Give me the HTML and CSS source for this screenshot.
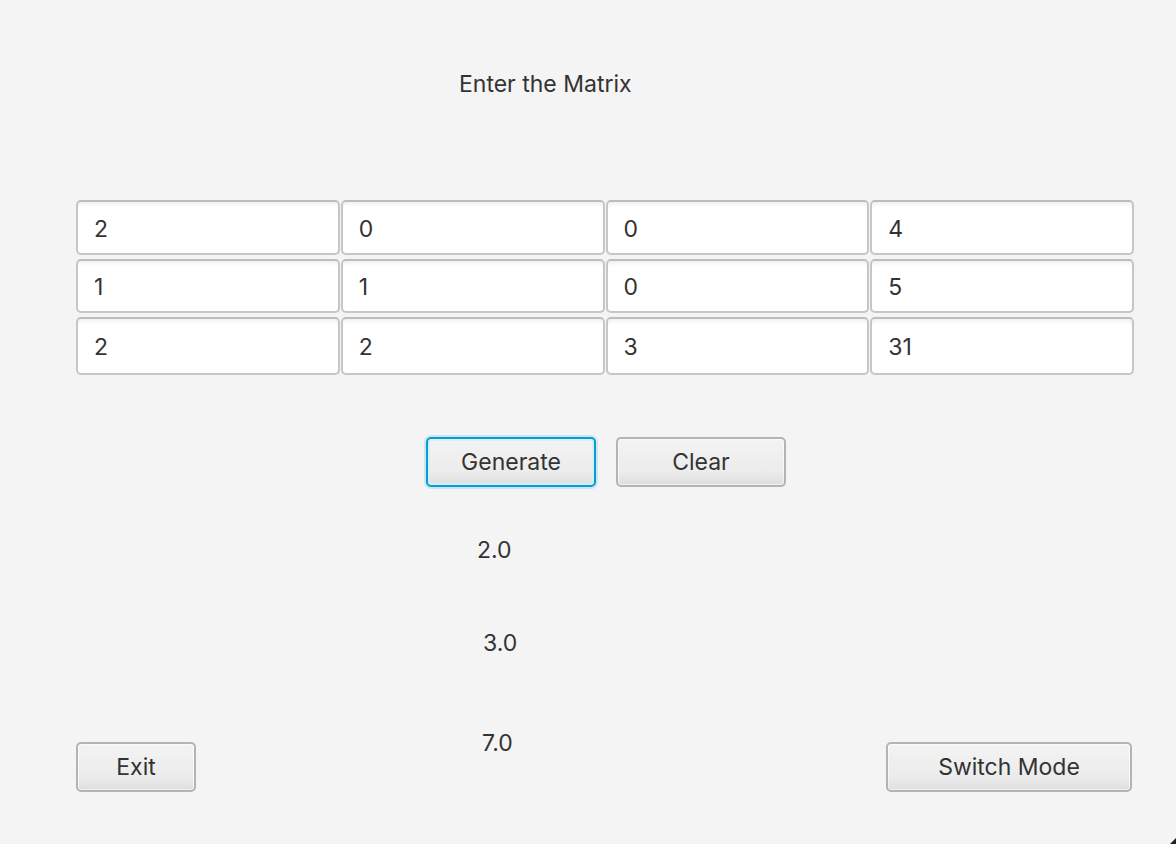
FILE: index.html
```html
<!DOCTYPE html>
<html>
<head>
<meta charset="utf-8">
<title>Matrix</title>
<link rel="stylesheet" href="styles.css">
</head>
<body>
<div class="app">
  <div class="title">Enter the Matrix</div>

  <div class="matrix">
    <div class="field">2</div><div class="field">0</div><div class="field">0</div><div class="field">4</div>
    <div class="field">1</div><div class="field">1</div><div class="field">0</div><div class="field">5</div>
    <div class="field">2</div><div class="field">2</div><div class="field">3</div><div class="field">31</div>
  </div>

  <div class="actions">
    <button class="btn btn-action focused">Generate</button>
    <button class="btn btn-action">Clear</button>
  </div>

  <div class="result r1">2.0</div>
  <div class="result r2">3.0</div>

  <div class="footer">
    <button class="btn btn-exit">Exit</button>
    <div class="result r3">7.0</div>
    <button class="btn btn-switch">Switch Mode</button>
  </div>
</div>
<svg class="grip" width="6" height="6" viewBox="0 0 6 6"><polygon points="6,0 6,6 0,6" fill="#222"/></svg>
</body>
</html>
```

FILE: styles.css
```css
html, body {
  margin: 0;
  padding: 0;
  background: #f4f4f4;
  width: 1176px;
  height: 844px;
  overflow: hidden;
}

body {
  font-family: Inter, "Noto Sans", "Liberation Sans", sans-serif;
  font-size: 23px;
  color: #333333;
}

.app {
  display: flex;
  flex-direction: column;
  padding: 70px 42px 0 76px;
}

.title {
  line-height: 28px;
  height: 28px;
  padding-left: 383px;
}

.matrix {
  margin-top: 102px;
  display: grid;
  grid-template-columns: repeat(4, 1fr);
  grid-template-rows: 55px 54px 58px;
  column-gap: 1px;
  row-gap: 4px;
}

.field {
  box-sizing: border-box;
  display: flex;
  align-items: center;
  padding: 2px 0 0 16px;
  background: #ffffff;
  border: 2px solid #c6c6c6;
  border-top-color: #bdbdbd;
  border-radius: 5px;
  box-shadow: inset 0 5px 4px -3px rgba(0, 0, 0, 0.07);
}

.actions {
  margin-top: 62px;
  display: flex;
  gap: 20px;
  padding-left: 350px;
}

.btn {
  box-sizing: border-box;
  height: 50px;
  font-family: inherit;
  font-size: 23px;
  color: #333333;
  border: 2px solid #b4b4b4;
  border-radius: 5px;
  background: linear-gradient(to bottom, #f3f3f3 0%, #ececec 70%, #dedede 100%);
  box-shadow: inset 0 0 0 1px rgba(255, 255, 255, 0.55);
  padding: 0;
  display: flex;
  align-items: center;
  justify-content: center;
}

.btn-action {
  width: 170px;
}

.focused {
  border-color: #039ed3;
  box-shadow: 0 0 0 2px rgba(3, 158, 211, 0.16), inset 0 0 0 2px rgba(213, 238, 248, 0.9);
}

.result {
  line-height: 28px;
  height: 28px;
}

.r1 {
  margin-top: 49px;
  padding-left: 401px;
}

.r2 {
  margin-top: 65px;
  padding-left: 407px;
}

.footer {
  margin-top: 72px;
  display: flex;
  align-items: flex-start;
}

.btn-exit {
  width: 120px;
  margin-top: 13px;
}

.r3 {
  margin-left: 286px;
}

.btn-switch {
  width: 246px;
  margin-top: 13px;
  margin-left: auto;
  margin-right: 2px;
}

.grip {
  position: absolute;
  right: 0;
  bottom: 0;
}
```
